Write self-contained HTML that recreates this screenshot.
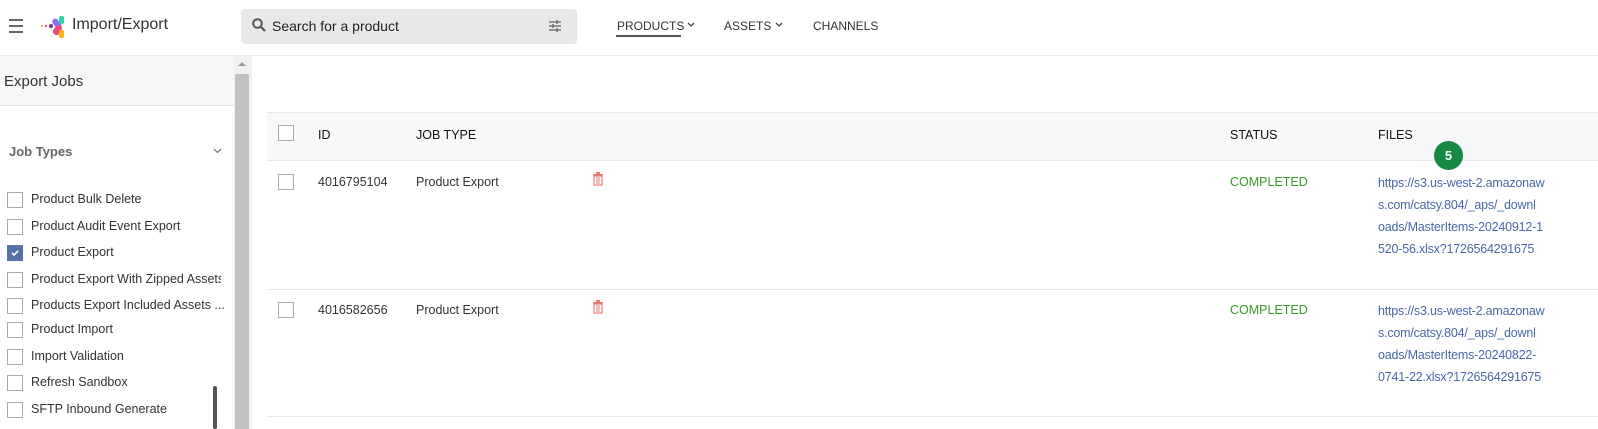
<!DOCTYPE html><html><head><style>
*{margin:0;padding:0;box-sizing:border-box}
body{width:1598px;height:429px;overflow:hidden;background:#fff;font-family:"Liberation Sans",sans-serif;color:#222;position:relative}
.a{position:absolute}
.cb{position:absolute;width:16px;height:16px;border:1px solid #aaa;background:#fff}
.si{font-size:12.5px;color:#333;position:absolute;left:31px}
.th{position:absolute;top:128px;font-size:12.5px;color:#111}
.td{position:absolute;font-size:12.5px;color:#333}
.link{position:absolute;left:1378px;font-size:12.5px;line-height:22px;color:#4a68a8;white-space:nowrap;letter-spacing:-0.2px}
</style></head><body>
<div class="a" style="left:0;top:55px;width:1598px;height:1px;background:#e8ecef"></div>
<div class="a" style="left:9px;top:19px;width:14px;height:2px;background:#666"></div>
<div class="a" style="left:9px;top:25px;width:14px;height:2px;background:#666"></div>
<div class="a" style="left:9px;top:31px;width:14px;height:2px;background:#666"></div>
<svg class="a" style="left:40px;top:15px" width="26" height="24"><circle cx="2" cy="11" r="1" fill="#f7a21b"/><circle cx="6" cy="11" r="1.2" fill="#e9477a"/><circle cx="11" cy="11" r="2" fill="#8e2a8f"/><rect x="14" y="3" width="6" height="12" rx="3" transform="rotate(-35 17 9)" fill="#8b6cf0"/><rect x="19" y="1" width="5" height="8" rx="2" fill="#2fd4a5"/><rect x="14" y="10" width="7" height="10" rx="3" transform="rotate(35 17 15)" fill="#f0487a"/><rect x="19" y="15" width="5" height="8" rx="2" fill="#f8b418"/></svg>
<div class="a" style="left:72px;top:16px;font-size:16px;color:#333">Import/Export</div>
<div class="a" style="left:241px;top:9px;width:336px;height:35px;background:#e8e8e8;border-radius:4px"></div>
<svg class="a" style="left:252px;top:18px" width="14" height="14"><circle cx="5.5" cy="5.5" r="4.3" stroke="#555" stroke-width="2" fill="none"/><line x1="8.5" y1="8.5" x2="13" y2="13" stroke="#555" stroke-width="2.2"/></svg>
<div class="a" style="left:272px;top:18px;font-size:14px;color:#222">Search for a product</div>
<svg class="a" style="left:548px;top:20px" width="14" height="12" stroke="#666" stroke-width="1.3"><line x1="1" y1="2" x2="13" y2="2"/><line x1="1" y1="6" x2="13" y2="6"/><line x1="1" y1="10" x2="13" y2="10"/><line x1="9" y1="0" x2="9" y2="4"/><line x1="5" y1="4" x2="5" y2="8"/><line x1="9" y1="8" x2="9" y2="12"/></svg>
<div class="a" style="left:617px;top:19px;font-size:12px;color:#333">PRODUCTS</div>
<div class="a" style="left:616px;top:35px;width:65px;height:2px;background:#555"></div>
<div class="a" style="left:724px;top:19px;font-size:12px;color:#333">ASSETS</div>
<svg class="a" style="left:687px;top:22px" width="8" height="6"><path d="M1 1l3 3 3-3" stroke="#444" fill="none" stroke-width="1.3"/></svg>
<svg class="a" style="left:775px;top:22px" width="8" height="6"><path d="M1 1l3 3 3-3" stroke="#444" fill="none" stroke-width="1.3"/></svg>
<div class="a" style="left:813px;top:19px;font-size:12px;color:#333">CHANNELS</div>
<div class="a" style="left:0;top:56px;width:234px;height:50px;background:#f7f7f7;border-bottom:1px solid #e6e6e6"></div>
<div class="a" style="left:4px;top:73px;font-size:15px;color:#333">Export Jobs</div>
<div class="a" style="left:234px;top:56px;width:16px;height:373px;background:#f1f1f1"></div>
<div class="a" style="left:235px;top:74px;width:14px;height:355px;background:#c1c1c1"></div>
<svg class="a" style="left:237px;top:61px" width="10" height="6"><path d="M1 5l4-4 4 4z" fill="#999"/></svg>
<div class="a" style="left:250px;top:56px;width:2px;height:373px;background:#eef0f2"></div>
<div class="a" style="left:9px;top:144px;font-size:13px;font-weight:bold;color:#666">Job Types</div>
<svg class="a" style="left:213px;top:148px" width="9" height="6"><path d="M1 1l3.5 3.5L8 1" stroke="#666" fill="none" stroke-width="1.1"/></svg>
<div class="cb" style="left:7px;top:192px"></div><div class="si" style="top:192px">Product Bulk Delete</div>
<div class="cb" style="left:7px;top:219px"></div><div class="si" style="top:219px">Product Audit Event Export</div>
<div class="cb" style="left:7px;top:245px;background:#5471a8;border-color:#5471a8"><svg width="14" height="14" style="position:absolute;left:0;top:0"><path d="M4 7l2 2 4-4" stroke="#fff" stroke-width="1.6" fill="none"/></svg></div><div class="si" style="top:245px">Product Export</div>
<div class="cb" style="left:7px;top:272px"></div><div class="si" style="top:272px;width:190px;overflow:hidden;white-space:nowrap">Product Export With Zipped Assets</div>
<div class="cb" style="left:7px;top:298px"></div><div class="si" style="top:298px;white-space:nowrap">Products Export Included Assets ...</div>
<div class="cb" style="left:7px;top:322px"></div><div class="si" style="top:322px">Product Import</div>
<div class="cb" style="left:7px;top:349px"></div><div class="si" style="top:349px">Import Validation</div>
<div class="cb" style="left:7px;top:375px"></div><div class="si" style="top:375px">Refresh Sandbox</div>
<div class="cb" style="left:7px;top:402px"></div><div class="si" style="top:402px">SFTP Inbound Generate</div>
<div class="a" style="left:213px;top:386px;width:4px;height:43px;background:#555;border-radius:2px"></div>
<div class="a" style="left:267px;top:112px;width:1331px;height:49px;background:#f7f8fa;border-top:1px solid #e6e9ec;border-bottom:1px solid #e6e9ec"></div>
<div class="cb" style="left:278px;top:125px"></div>
<div class="th" style="left:318px">ID</div>
<div class="th" style="left:416px">JOB TYPE</div>
<div class="th" style="left:1230px">STATUS</div>
<div class="th" style="left:1378px">FILES</div>
<div class="a" style="left:1434px;top:141px;width:29px;height:29px;border-radius:50%;background:#168a45;color:#fff;font-size:13px;font-weight:bold;text-align:center;line-height:29px">5</div>
<div class="cb" style="left:278px;top:174px"></div>
<div class="td" style="left:318px;top:175px">4016795104</div>
<div class="td" style="left:416px;top:175px">Product Export</div>
<svg class="a" style="left:592px;top:172px" width="12" height="14"><rect x="1" y="2" width="10" height="1.5" fill="#e77"/><rect x="4" y="0" width="4" height="2" fill="#e77"/><rect x="2" y="4" width="8" height="9" fill="none" stroke="#e77" stroke-width="1.2"/><line x1="5" y1="5" x2="5" y2="12" stroke="#e77"/><line x1="7" y1="5" x2="7" y2="12" stroke="#e77"/></svg>
<div class="td" style="left:1230px;top:175px;color:#3a9a2a">COMPLETED</div>
<div class="link" style="top:172px">https://s3.us-west-2.amazonaw<br>s.com/catsy.804/_aps/_downl<br>oads/MasterItems-20240912-1<br>520-56.xlsx?1726564291675</div>
<div class="a" style="left:267px;top:289px;width:1331px;height:1px;background:#e6e9ec"></div>
<div class="cb" style="left:278px;top:302px"></div>
<div class="td" style="left:318px;top:303px">4016582656</div>
<div class="td" style="left:416px;top:303px">Product Export</div>
<svg class="a" style="left:592px;top:300px" width="12" height="14"><rect x="1" y="2" width="10" height="1.5" fill="#e77"/><rect x="4" y="0" width="4" height="2" fill="#e77"/><rect x="2" y="4" width="8" height="9" fill="none" stroke="#e77" stroke-width="1.2"/><line x1="5" y1="5" x2="5" y2="12" stroke="#e77"/><line x1="7" y1="5" x2="7" y2="12" stroke="#e77"/></svg>
<div class="td" style="left:1230px;top:303px;color:#3a9a2a">COMPLETED</div>
<div class="link" style="top:300px">https://s3.us-west-2.amazonaw<br>s.com/catsy.804/_aps/_downl<br>oads/MasterItems-20240822-<br>0741-22.xlsx?1726564291675</div>
<div class="a" style="left:267px;top:416px;width:1331px;height:1px;background:#e6e9ec"></div>
</body></html>
